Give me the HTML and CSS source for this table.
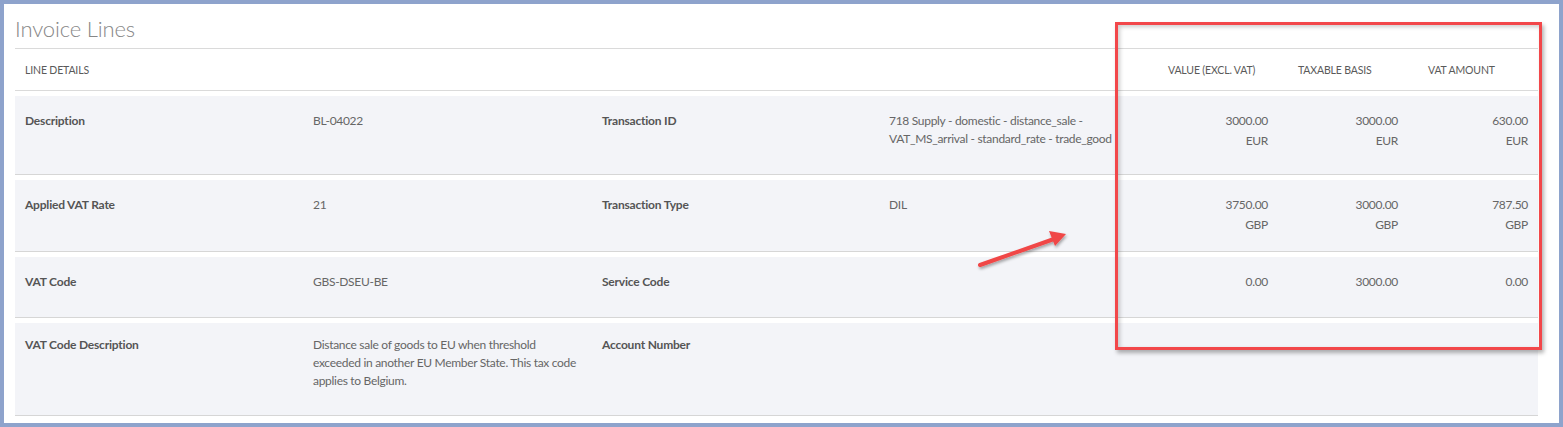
FILE: index.html
```html
<!DOCTYPE html>
<html lang="en">
<head>
<meta charset="utf-8">
<title>Invoice Lines</title>
<link rel="stylesheet" href="styles.css">
</head>
<body>
<div class="frame">
  <section class="panel">
    <h2 class="panel-title">Invoice Lines</h2>
    <div class="lines">
      <div class="head">
        <div class="head-cell head-cell--wide">Line Details</div>
        <div class="head-cell">Value (Excl. VAT)</div>
        <div class="head-cell">Taxable Basis</div>
        <div class="head-cell">VAT Amount</div>
      </div>
      <div class="row row--1">
        <div class="cell label">Description</div>
        <div class="cell value">BL-04022</div>
        <div class="cell label">Transaction ID</div>
        <div class="cell value">718 Supply - domestic - distance_sale - VAT_MS_arrival - standard_rate - trade_good</div>
        <div class="cell amount">3000.00<br>EUR</div>
        <div class="cell amount">3000.00<br>EUR</div>
        <div class="cell amount">630.00<br>EUR</div>
      </div>
      <div class="row row--2">
        <div class="cell label">Applied VAT Rate</div>
        <div class="cell value">21</div>
        <div class="cell label">Transaction Type</div>
        <div class="cell value">DIL</div>
        <div class="cell amount">3750.00<br>GBP</div>
        <div class="cell amount">3000.00<br>GBP</div>
        <div class="cell amount">787.50<br>GBP</div>
      </div>
      <div class="row row--3">
        <div class="cell label">VAT Code</div>
        <div class="cell value">GBS-DSEU-BE</div>
        <div class="cell label">Service Code</div>
        <div class="cell value"></div>
        <div class="cell amount">0.00</div>
        <div class="cell amount">3000.00</div>
        <div class="cell amount">0.00</div>
      </div>
      <div class="row row--4">
        <div class="cell label">VAT Code Description</div>
        <div class="cell value">Distance sale of goods to EU when threshold exceeded in another EU Member State. This tax code applies to Belgium.</div>
        <div class="cell label">Account Number</div>
        <div class="cell value"></div>
        <div class="cell amount"></div>
        <div class="cell amount"></div>
        <div class="cell amount"></div>
      </div>
    </div>
  </section>

  <div class="highlight-box"></div>
  <svg class="annot-arrow" width="110" height="60" viewBox="0 0 110 60" aria-hidden="true">
    <defs>
      <filter id="sh" x="-20%" y="-40%" width="140%" height="180%">
        <feDropShadow dx="1" dy="2" stdDeviation="1.5" flood-color="#000" flood-opacity="0.35"/>
      </filter>
    </defs>
    <g filter="url(#sh)">
      <line x1="10" y1="46" x2="84" y2="20" stroke="#f04747" stroke-width="4" stroke-linecap="round"/>
      <polygon points="96,15 79,12 85,27" fill="#f04747"/>
    </g>
  </svg>
</div>
</body>
</html>
```

FILE: styles.css
```css
* { box-sizing: border-box; }

html, body {
  margin: 0;
  padding: 0;
}

body {
  font-family: "Source Sans Pro", Lato, "Noto Sans", sans-serif;
  background: #8ea3cc;
  width: 1563px;
  height: 427px;
  overflow: hidden;
}

.frame {
  position: relative;
  margin: 4px;
  width: 1555px;
  height: 419px;
  background: #ffffff;
  padding: 0 21px 0 11px;
}

.panel-title {
  margin: 0;
  height: 45px;
  padding-top: 12px;
  font-family: Lato, sans-serif;
  font-weight: 300;
  font-size: 22px;
  line-height: 26px;
  letter-spacing: -0.15px;
  color: #878787;
  border-bottom: 1px solid #dadada;
}

.head,
.row {
  display: grid;
  grid-template-columns: 288px 289px 287px 269px 130px 130px 130px;
}

.head {
  height: 42px;
  border-bottom: 1px solid #dadada;
  align-items: center;
  font-size: 10.5px;
  letter-spacing: -0.15px;
  color: #5a5a5a;
  text-transform: uppercase;
}

.head-cell {
  padding: 0 0 0 20px;
  white-space: nowrap;
}

.head-cell--wide {
  grid-column: 1 / span 4;
  padding-left: 10px;
}

.row {
  margin-top: 5px;
  background: #f3f4f8;
  border-bottom: 1px solid #d6d6d6;
  font-size: 12px;
}

.row--1 { height: 79px; }
.row--2 { height: 72px; }
.row--3 { height: 61px; }
.row--4 { height: 93px; }

.cell {
  padding: 16px 10px 0 10px;
  line-height: 18px;
}

.row--4 .cell { padding-top: 13px; }

.label {
  font-weight: 700;
  color: #555555;
  letter-spacing: -0.2px;
}

.value {
  color: #666666;
  letter-spacing: -0.3px;
}

.amount {
  text-align: right;
  color: #666666;
  line-height: 20px;
  padding-top: 15px;
  letter-spacing: -0.3px;
}

.highlight-box {
  position: absolute;
  left: 1111px;
  top: 18px;
  width: 427px;
  height: 328px;
  border: 3px solid #f2474a;
  box-shadow: 2px 3px 4px rgba(0, 0, 0, 0.3), inset 2px 2px 4px rgba(0, 0, 0, 0.2);
  pointer-events: none;
}

.annot-arrow {
  position: absolute;
  left: 966px;
  top: 215px;
  overflow: visible;
}
```
